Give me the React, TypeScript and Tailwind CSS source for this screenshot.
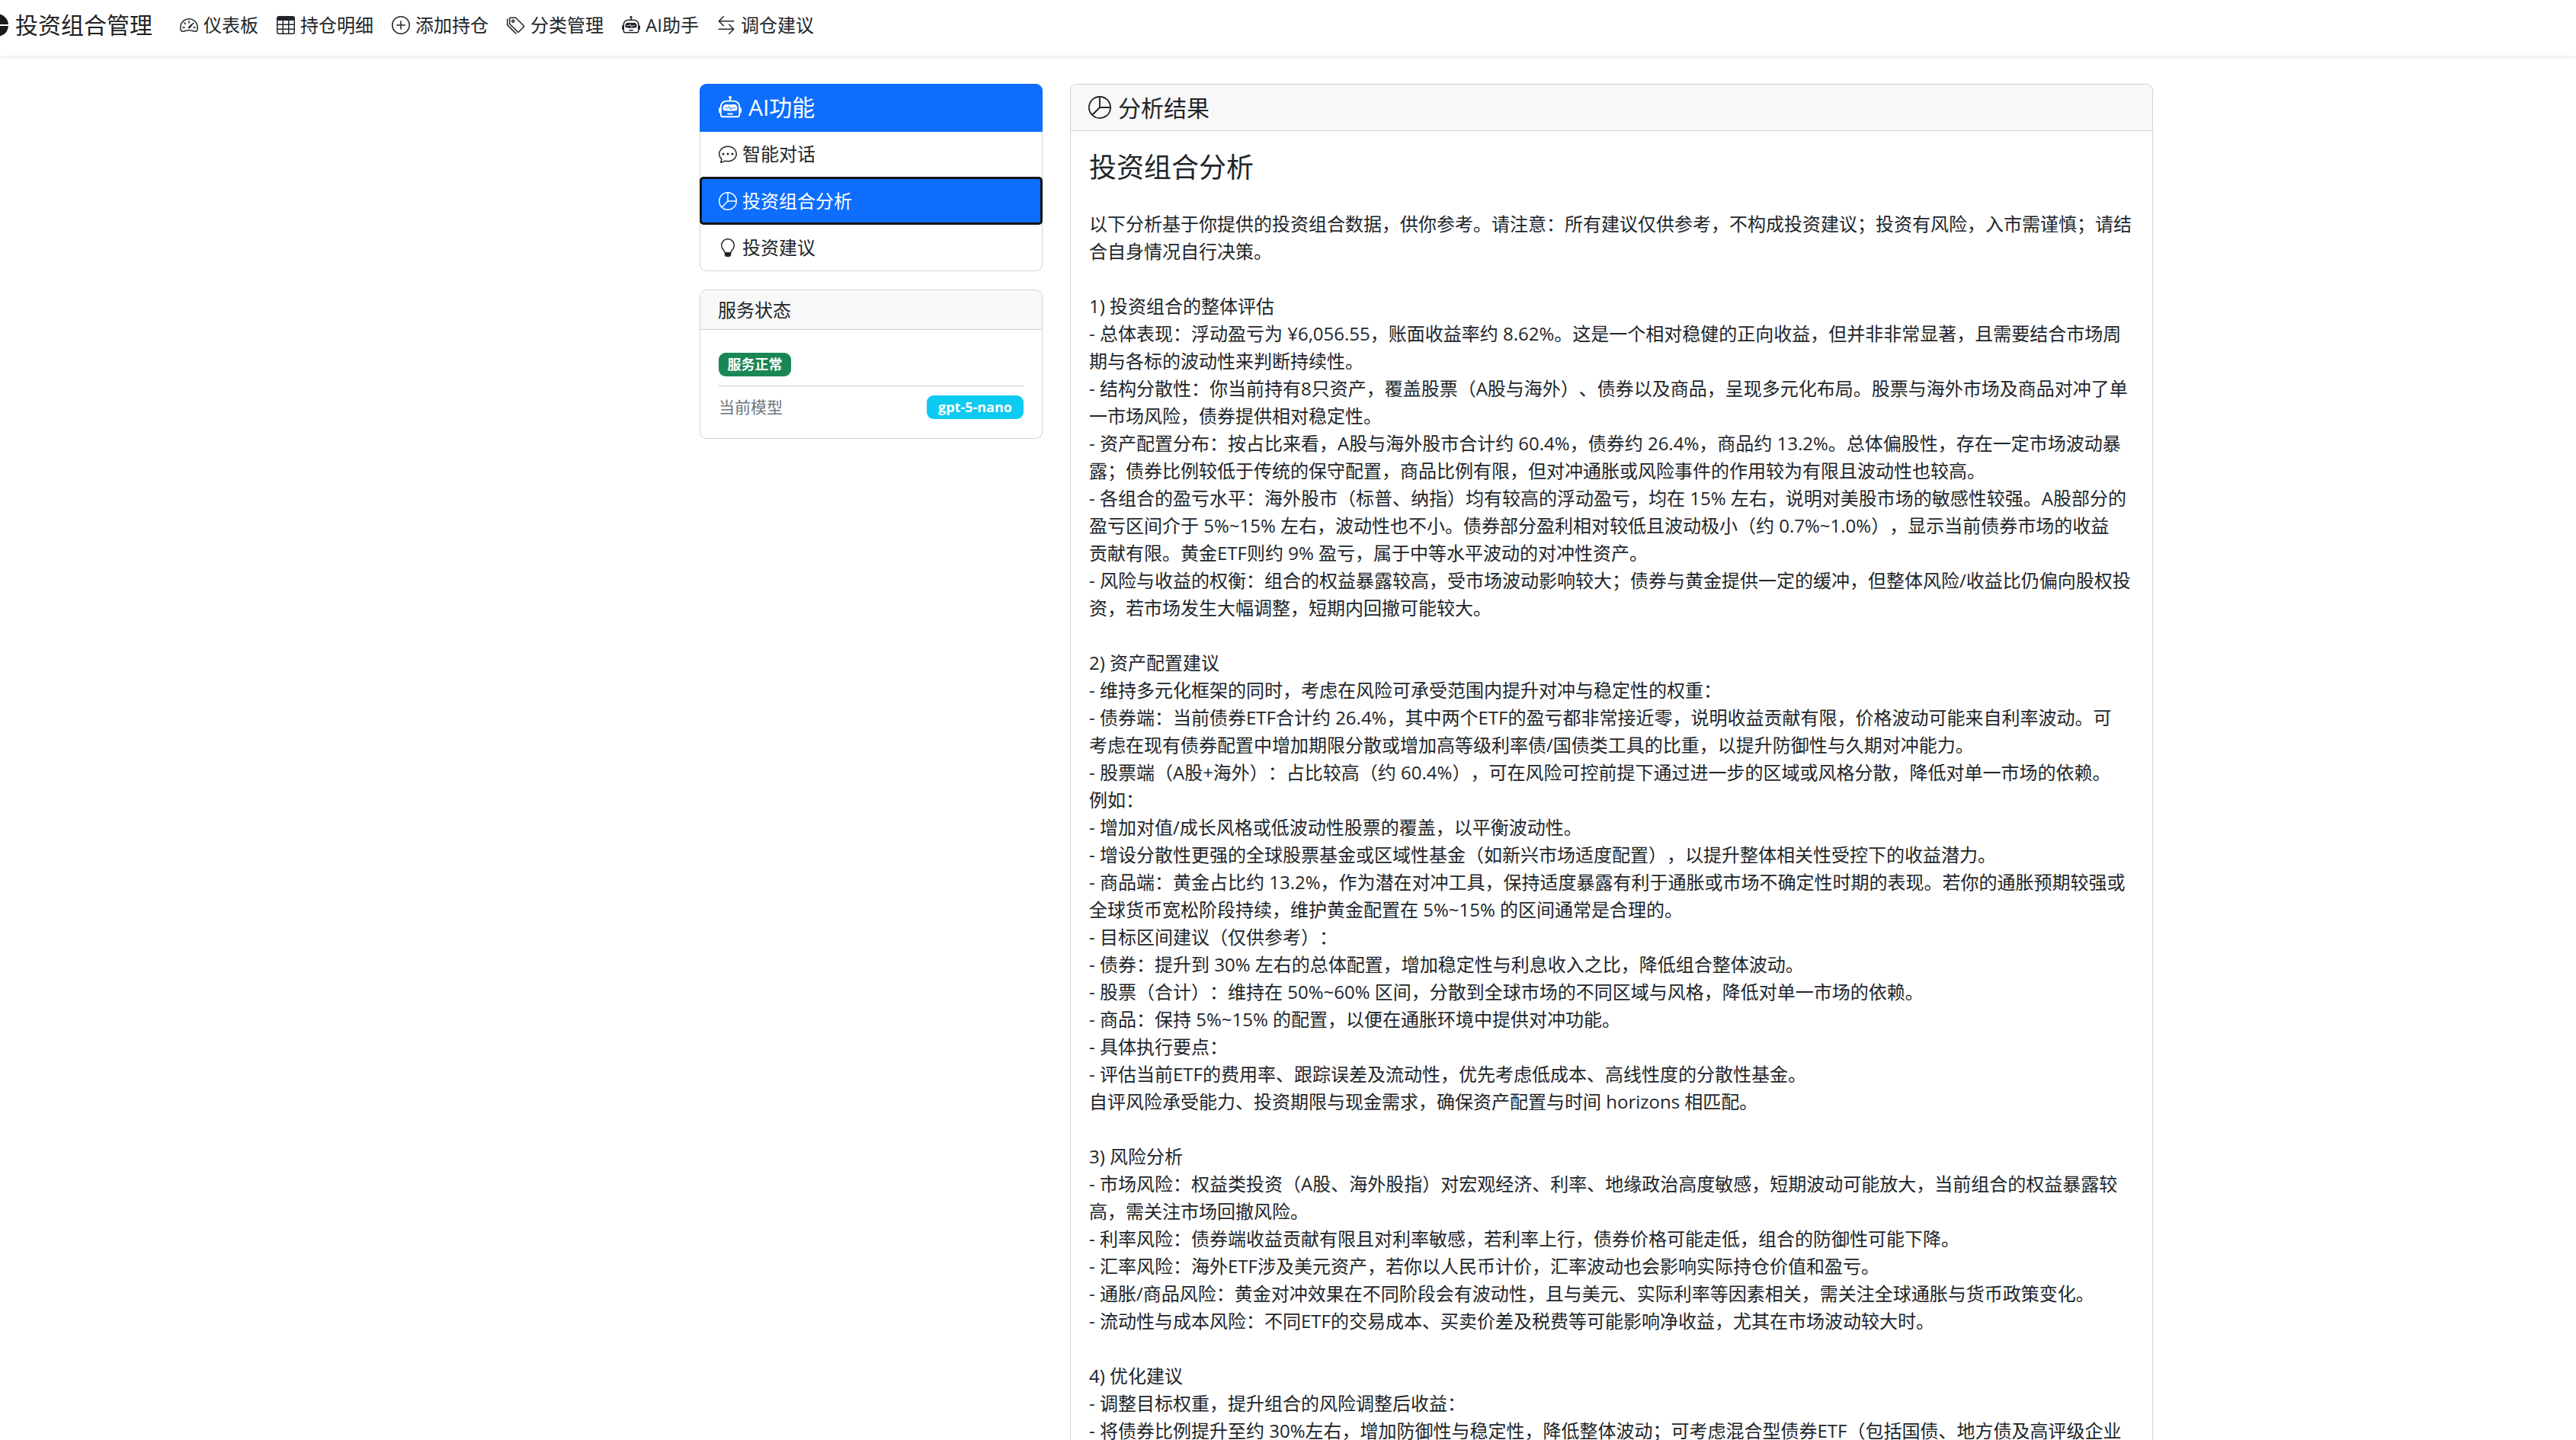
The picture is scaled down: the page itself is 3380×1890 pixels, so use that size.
import type { ComponentType } from "react";
import {
  BsArrowLeftRight,
  BsChatDots,
  BsLightbulb,
  BsPieChart,
  BsPieChartFill,
  BsPlusCircle,
  BsRobot,
  BsSpeedometer2,
  BsTable,
  BsTags,
} from "react-icons/bs";

const navItems: { label: string; icon: ComponentType<{ className?: string }> }[] = [
  { label: "仪表板", icon: BsSpeedometer2 },
  { label: "持仓明细", icon: BsTable },
  { label: "添加持仓", icon: BsPlusCircle },
  { label: "分类管理", icon: BsTags },
  { label: "AI助手", icon: BsRobot },
  { label: "调仓建议", icon: BsArrowLeftRight },
];

const report = [
  "以下分析基于你提供的投资组合数据，供你参考。请注意：所有建议仅供参考，不构成投资建议；投资有风险，入市需谨慎；请结",
  "合自身情况自行决策。",
  "",
  "1) 投资组合的整体评估",
  "- 总体表现：浮动盈亏为 ¥6,056.55，账面收益率约 8.62%。这是一个相对稳健的正向收益，但并非非常显著，且需要结合市场周",
  "期与各标的波动性来判断持续性。",
  "- 结构分散性：你当前持有8只资产，覆盖股票（A股与海外）、债券以及商品，呈现多元化布局。股票与海外市场及商品对冲了单",
  "一市场风险，债券提供相对稳定性。",
  "- 资产配置分布：按占比来看，A股与海外股市合计约 60.4%，债券约 26.4%，商品约 13.2%。总体偏股性，存在一定市场波动暴",
  "露；债券比例较低于传统的保守配置，商品比例有限，但对冲通胀或风险事件的作用较为有限且波动性也较高。",
  "- 各组合的盈亏水平：海外股市（标普、纳指）均有较高的浮动盈亏，均在 15% 左右，说明对美股市场的敏感性较强。A股部分的",
  "盈亏区间介于 5%~15% 左右，波动性也不小。债券部分盈利相对较低且波动极小（约 0.7%~1.0%），显示当前债券市场的收益",
  "贡献有限。黄金ETF则约 9% 盈亏，属于中等水平波动的对冲性资产。",
  "- 风险与收益的权衡：组合的权益暴露较高，受市场波动影响较大；债券与黄金提供一定的缓冲，但整体风险/收益比仍偏向股权投",
  "资，若市场发生大幅调整，短期内回撤可能较大。",
  "",
  "2) 资产配置建议",
  "- 维持多元化框架的同时，考虑在风险可承受范围内提升对冲与稳定性的权重：",
  "- 债券端：当前债券ETF合计约 26.4%，其中两个ETF的盈亏都非常接近零，说明收益贡献有限，价格波动可能来自利率波动。可",
  "考虑在现有债券配置中增加期限分散或增加高等级利率债/国债类工具的比重，以提升防御性与久期对冲能力。",
  "- 股票端（A股+海外）：占比较高（约 60.4%），可在风险可控前提下通过进一步的区域或风格分散，降低对单一市场的依赖。",
  "例如：",
  "- 增加对值/成长风格或低波动性股票的覆盖，以平衡波动性。",
  "- 增设分散性更强的全球股票基金或区域性基金（如新兴市场适度配置），以提升整体相关性受控下的收益潜力。",
  "- 商品端：黄金占比约 13.2%，作为潜在对冲工具，保持适度暴露有利于通胀或市场不确定性时期的表现。若你的通胀预期较强或",
  "全球货币宽松阶段持续，维护黄金配置在 5%~15% 的区间通常是合理的。",
  "- 目标区间建议（仅供参考）：",
  "- 债券：提升到 30% 左右的总体配置，增加稳定性与利息收入之比，降低组合整体波动。",
  "- 股票（合计）：维持在 50%~60% 区间，分散到全球市场的不同区域与风格，降低对单一市场的依赖。",
  "- 商品：保持 5%~15% 的配置，以便在通胀环境中提供对冲功能。",
  "- 具体执行要点：",
  "- 评估当前ETF的费用率、跟踪误差及流动性，优先考虑低成本、高线性度的分散性基金。",
  "自评风险承受能力、投资期限与现金需求，确保资产配置与时间 horizons 相匹配。",
  "",
  "3) 风险分析",
  "- 市场风险：权益类投资（A股、海外股指）对宏观经济、利率、地缘政治高度敏感，短期波动可能放大，当前组合的权益暴露较",
  "高，需关注市场回撤风险。",
  "- 利率风险：债券端收益贡献有限且对利率敏感，若利率上行，债券价格可能走低，组合的防御性可能下降。",
  "- 汇率风险：海外ETF涉及美元资产，若你以人民币计价，汇率波动也会影响实际持仓价值和盈亏。",
  "- 通胀/商品风险：黄金对冲效果在不同阶段会有波动性，且与美元、实际利率等因素相关，需关注全球通胀与货币政策变化。",
  "- 流动性与成本风险：不同ETF的交易成本、买卖价差及税费等可能影响净收益，尤其在市场波动较大时。",
  "",
  "4) 优化建议",
  "- 调整目标权重，提升组合的风险调整后收益：",
  "- 将债券比例提升至约 30%左右，增加防御性与稳定性，降低整体波动；可考虑混合型债券ETF（包括国债、地方债及高评级企业",
];

function Navbar() {
  return (
    <nav className="flex h-[73px] items-center bg-white pb-[8px] shadow-[0_3px_6px_rgba(0,0,0,0.075)]">
      <div className="-ml-[19px] flex items-center gap-[9px] text-[30px] leading-[36px] text-[#000000e6]">
        <BsPieChartFill className="h-[30px] w-[30px]" />
        投资组合管理
      </div>
      <div className="ml-[24px] flex items-center">
        {navItems.map(({ label, icon: Icon }) => (
          <div key={label} className="flex items-center gap-[7px] px-[12px] text-[24px] leading-[36px] text-[#212529]">
            <Icon className="h-[24px] w-[24px]" />
            {label}
          </div>
        ))}
      </div>
    </nav>
  );
}

function Sidebar() {
  return (
    <aside className="w-[450px] shrink-0">
      <div className="rounded-[9px] border border-[#d2d2d2] bg-white">
        <div className="-m-px flex h-[63px] items-center gap-[9px] rounded-t-[9px] bg-[#0d6efd] px-[25px] pb-[2px] text-[30px] text-white">
          <BsRobot className="h-[30px] w-[30px]" />
          AI功能
        </div>
        <div className="flex h-[60px] items-center gap-[7px] px-[24px] text-[24px]">
          <BsChatDots className="h-[24px] w-[24px]" />
          智能对话
        </div>
        <div className="-mx-px flex h-[63px] items-center gap-[7px] rounded-[5px] border-[3px] border-[#141414] bg-[#0d6efd] px-[22px] text-[24px] text-white">
          <BsPieChart className="h-[24px] w-[24px]" />
          投资组合分析
        </div>
        <div className="flex h-[60px] items-center gap-[7px] px-[24px] text-[24px]">
          <BsLightbulb className="h-[24px] w-[24px]" />
          投资建议
        </div>
      </div>

      <div className="mt-[24px] h-[196px] rounded-[9px] border border-[#d2d2d2] bg-white">
        <div className="flex h-[52px] items-center rounded-t-[9px] border-b border-[#d2d2d2] bg-[#f8f8f8] px-[23px] text-[24px]">
          服务状态
        </div>
        <div className="px-[24px] pt-[30px]">
          <span className="flex h-[31px] w-[95px] items-center justify-center rounded-[9px] bg-[#198754] text-[18px] font-bold text-white">
            服务正常
          </span>
          <div className="mt-[12px] border-t border-[#c6c7c8]" />
          <div className="mt-[12px] flex items-center justify-between">
            <span className="text-[21px] text-[#6c757d]">当前模型</span>
            <span className="flex h-[31px] w-[127px] items-center justify-center rounded-[9px] bg-[#0dcaf0] text-[18px] font-bold text-white">
              gpt-5-nano
            </span>
          </div>
        </div>
      </div>
    </aside>
  );
}

function ResultCard() {
  return (
    <main className="w-[1421px] shrink-0 rounded-[9px] border border-[#d2d2d2] bg-white">
      <div className="flex h-[61px] items-center gap-[9px] rounded-t-[9px] border-b border-[#d2d2d2] bg-[#f8f8f8] px-[23px] text-[30px]">
        <BsPieChart className="h-[30px] w-[30px]" />
        分析结果
      </div>
      <div className="p-[24px]">
        <h4 className="mb-[35px] pt-[2px] text-[36px] leading-[43px]">投资组合分析</h4>
        <p className="whitespace-pre text-[24px] leading-[36px]">{report.join("\n")}</p>
      </div>
    </main>
  );
}

export default function App() {
  return (
    <div className="h-[1890px] overflow-hidden bg-white font-['Open_Sans','Noto_Sans_CJK_SC',sans-serif] text-[#212529] [text-spacing-trim:space-all]">
      <Navbar />
      <div className="flex gap-[36px] pl-[918px] pt-[37px]">
        <Sidebar />
        <ResultCard />
      </div>
    </div>
  );
}
